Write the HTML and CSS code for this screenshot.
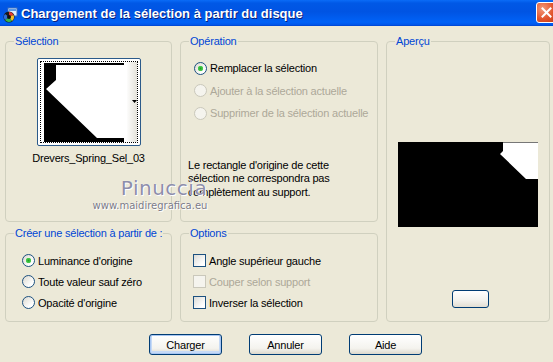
FILE: index.html
```html
<!DOCTYPE html>
<html lang="fr">
<head>
  <meta charset="UTF-8">
  <title>Chargement de la sélection à partir du disque</title>
  <link rel="stylesheet" href="styles.css">
</head>
<body>
  <div class="window">
    <div class="titlebar">
      <svg class="app-icon" width="16" height="16" viewBox="0 0 16 16">
        <rect x="6" y="1" width="9" height="8" fill="#dfeeff" stroke="#3a6fc0"/>
        <rect x="7" y="2" width="7" height="2" fill="#5a9ae8"/>
        <circle cx="7" cy="10" r="5.5" fill="#1a1a1a"/>
        <path d="M7 10 L7 5 A5 5 0 0 1 11.5 8 Z" fill="#e63b2e"/>
        <path d="M7 10 L11.5 8 A5 5 0 0 1 10 14 Z" fill="#f3c12c"/>
        <path d="M7 10 L10 14 A5 5 0 0 1 3 13 Z" fill="#3bb54a"/>
        <path d="M7 10 L3 13 A5 5 0 0 1 3 7 Z" fill="#2f6fd8"/>
        <circle cx="7" cy="10" r="2" fill="#111"/>
      </svg>
      <span class="title">Chargement de la sélection à partir du disque</span>
      <span class="close-btn">
        <svg width="11" height="11" viewBox="0 0 11 11"><path d="M1.5 1.5 L9.5 9.5 M9.5 1.5 L1.5 9.5" stroke="#fff" stroke-width="2" stroke-linecap="square"/></svg>
      </span>
    </div>

    <div class="dialog">
      <fieldset class="group group-selection">
        <legend>Sélection</legend>
        <div class="group-body center">
          <div class="thumb">
            <div class="thumb-focus">
              <svg width="96" height="80" viewBox="0 0 96 80">
                <defs>
                  <linearGradient id="fade" x1="0" x2="1" y1="0" y2="0">
                    <stop offset="0" stop-color="#ffffff"/>
                    <stop offset="1" stop-color="#e4e2da"/>
                  </linearGradient>
                </defs>
                <rect x="85" y="0" width="11" height="80" fill="url(#fade)"/>
                <rect x="3" y="1" width="80" height="79" fill="#000"/>
                <polygon points="15,3 86,3 86,76 56,76 5,27 15,18" fill="#fff"/>
                <polygon points="91,38 96,38 93.5,41" fill="#000"/>
              </svg>
            </div>
          </div>
          <div class="thumb-name">Drevers_Spring_Sel_03</div>
        </div>
      </fieldset>

      <fieldset class="group group-operation">
        <legend>Opération</legend>
        <div class="group-body op-body">
          <div class="choice op-row"><span class="radio checked"></span>Remplacer la sélection</div>
          <div class="choice op-row disabled"><span class="radio"></span>Ajouter à la sélection actuelle</div>
          <div class="choice op-row disabled"><span class="radio"></span>Supprimer de la sélection actuelle</div>
          <p class="note">Le rectangle d'origine de cette<br>sélection ne correspondra pas<br>complètement au support.</p>
        </div>
      </fieldset>

      <fieldset class="group group-preview">
        <legend>Aperçu</legend>
        <div class="group-body center">
          <svg class="preview" width="140" height="85" viewBox="0 0 140 85">
            <rect width="140" height="85" fill="#000"/>
            <polygon points="105,1 140,1 140,37 128,37 102,12 105,9" fill="#fff"/>
            <rect x="105" y="0" width="35" height="1" fill="#777"/>
          </svg>
          <span class="zoom-btn"></span>
        </div>
      </fieldset>

      <fieldset class="group group-source">
        <legend>Créer une sélection à partir de :</legend>
        <div class="group-body list-body">
          <div class="choice"><span class="radio checked"></span>Luminance d'origine</div>
          <div class="choice"><span class="radio"></span>Toute valeur sauf zéro</div>
          <div class="choice"><span class="radio"></span>Opacité d'origine</div>
        </div>
      </fieldset>

      <fieldset class="group group-options">
        <legend>Options</legend>
        <div class="group-body list-body options-body">
          <div class="choice"><span class="check"></span>Angle supérieur gauche</div>
          <div class="choice disabled"><span class="check"></span>Couper selon support</div>
          <div class="choice"><span class="check"></span>Inverser la sélection</div>
        </div>
      </fieldset>
    </div>

    <div class="buttons">
      <span class="btn default">Charger</span>
      <span class="btn">Annuler</span>
      <span class="btn">Aide</span>
    </div>

    <div class="watermark">
      <div class="wm-name">Pinuccia</div>
      <div class="wm-url">www.maidiregrafica.eu</div>
    </div>
  </div>
</body>
</html>
```

FILE: styles.css
```css
:root {
  --face: #ece9d8;
  --group-border: #d0d0bf;
  --group-title: #0046d5;
  --control-border: #1c5180;
  --disabled-text: #aca899;
  --disabled-border: #cac8bb;
}

body {
  margin: 0;
  width: 553px;
  height: 362px;
  overflow: hidden;
  background: var(--face);
  font-family: 'Liberation Sans', Arial, sans-serif;
  font-size: 11px;
  letter-spacing: -0.2px;
  color: #000;
}

.window {
  position: relative;
  height: 362px;
}

/* Title bar */
.titlebar {
  height: 26px;
  display: flex;
  align-items: center;
  padding-left: 2px;
  background: linear-gradient(#0a6cf7 0%, #0058e6 12%, #0054e3 45%, #0062f7 85%, #0058ec 94%, #0043cf 100%);
}

.app-icon {
  margin-top: 3px;
}

.title {
  margin-left: 3px;
  color: #fff;
  font-weight: bold;
  font-size: 13px;
  letter-spacing: 0;
  text-shadow: 1px 1px 0 #0a1f7a;
  flex: 1;
}

.close-btn {
  width: 21px;
  height: 21px;
  margin-right: -4px;
  margin-top: -1px;
  box-sizing: border-box;
  border: 1px solid #fff;
  border-radius: 3px;
  background: radial-gradient(circle at 30% 30%, #f29a7b, #e2542d 55%, #c23b14);
  display: flex;
  align-items: center;
  justify-content: center;
}

/* Dialog layout */
.dialog {
  display: grid;
  grid-template-columns: 167px 198px 164px;
  grid-template-rows: 187px 95px;
  column-gap: 8px;
  row-gap: 5px;
  padding: 9px 0 0 5px;
}

.group {
  margin: 0;
  padding: 0;
  min-width: 0;
  border: 1px solid var(--group-border);
  border-radius: 4px;
}

.group legend {
  margin-left: 8px;
  padding: 0 1px;
  color: var(--group-title);
  line-height: 13px;
}

.group-preview {
  grid-column: 3;
  grid-row: 1 / span 2;
}

.center {
  display: flex;
  flex-direction: column;
  align-items: center;
}

/* Selection thumbnail */
.thumb {
  width: 104px;
  height: 88px;
  box-sizing: border-box;
  margin-top: 10px;
  padding: 2px;
  border: 1px solid #2b5a8a;
  border-radius: 2px;
  background: #fff;
}

.thumb-focus {
  height: 100%;
  box-sizing: border-box;
  border: 1px dotted #000;
  line-height: 0;
}

.thumb-name {
  margin-top: 6px;
  line-height: 13px;
}

/* Radio buttons and check boxes */
.choice {
  display: flex;
  align-items: center;
  height: 21px;
  white-space: nowrap;
}

.choice.disabled {
  color: var(--disabled-text);
}

.radio,
.check {
  width: 13px;
  height: 13px;
  box-sizing: border-box;
  margin-right: 3px;
  border: 1px solid var(--control-border);
  flex: none;
}

.radio {
  border-radius: 50%;
  background: linear-gradient(135deg, #dcd9cf, #fff 75%);
}

.radio.checked {
  background: radial-gradient(circle, #21a121 0, #4fd157 2.5px, transparent 3px), linear-gradient(135deg, #dcd9cf, #fff 75%);
}

.check {
  background: linear-gradient(135deg, #dcdcd7, #fff 80%);
}

.disabled .radio,
.disabled .check {
  border-color: var(--disabled-border);
  background: #f5f4ee;
}

.op-body {
  padding: 9px 0 0 13px;
}

.op-row {
  height: 22.5px;
}

.note {
  margin: 34px 0 0 -6px;
  line-height: 13.5px;
}

.list-body {
  padding: 10px 0 0 16px;
}

.options-body {
  padding-left: 12px;
}

/* Preview */
.preview {
  margin-top: 94px;
}

.zoom-btn {
  width: 37px;
  height: 18px;
  margin-top: 63px;
  margin-left: 5px;
  box-sizing: border-box;
  border: 1px solid #003c74;
  border-radius: 3px;
  background: linear-gradient(#fff, #f2f1ec 60%, #e2ded3);
}

/* Bottom buttons */
.buttons {
  display: flex;
  gap: 27px;
  padding: 12px 0 0 149px;
}

.btn {
  width: 73px;
  height: 21px;
  box-sizing: border-box;
  border: 1px solid #003c74;
  border-radius: 3px;
  background: linear-gradient(#fff, #f4f3ee 70%, #dcd8cc);
  display: flex;
  align-items: center;
  justify-content: center;
}

.btn.default {
  box-shadow: inset 0 0 0 1px #a8c6f2, inset 0 -1px 0 2px #c6daf6;
}

/* Watermark over the dialog */
.watermark {
  position: absolute;
  left: 88px;
  top: 177px;
  width: 124px;
  text-align: center;
  color: #8e8eab;
  text-shadow: 0 0 1px #fff, 1px 1px 0 #fff;
  font-family: 'DejaVu Sans', sans-serif;
  letter-spacing: 0;
}

.wm-name {
  font-size: 20px;
  line-height: 23px;
  padding-left: 28px;
  letter-spacing: 0.5px;
}

.wm-url {
  font-size: 10px;
  line-height: 12px;
  color: #7a7a86;
}
```
